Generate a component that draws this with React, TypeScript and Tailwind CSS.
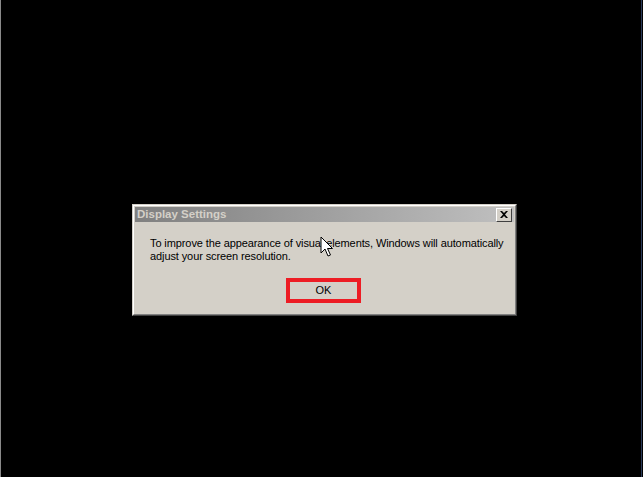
const Cursor = () => (
	<svg width="14" height="22" viewBox="0 0 14 22" className="absolute left-[320px] top-[236px]">
		<path d="M1 1 L1 17 L5 13 L8 20 L10.5 19 L7.5 12.5 L12.5 12.5 Z" fill="white" stroke="black" strokeWidth="1" />
	</svg>
);

const App = () => {
	return (
		<div className="relative w-[643px] h-[477px] bg-black overflow-hidden">
			<div className="absolute left-0 top-0 w-px h-full bg-[#8a8a8a]" />
			<div className="absolute right-[1px] top-0 w-px h-full bg-[#2a3a5a]" />
			<div className="pt-[204px] pl-[132px]">
				{/* ----- Dialog ----- */}
				<div
					className="w-[385px] h-[112px] bg-[#d4d0c8] border border-t-[#d4d0c8] border-l-[#d4d0c8] border-r-[#404040] border-b-[#404040]"
					style={{ fontFamily: "Tahoma, 'Liberation Sans', sans-serif" }}
				>
					<div className="h-full border border-t-white border-l-white border-r-[#808080] border-b-[#808080] p-px flex flex-col">
						<div className="h-[15px] flex items-center justify-between bg-gradient-to-r from-[#808080] to-[#c0c0c0] pl-[2px] pr-[2px]">
							<span className="text-[11.5px] font-bold text-[#d4d0c8] leading-none">Display Settings</span>
							<button className="w-[16px] h-[14px] bg-[#d4d0c8] border border-t-white border-l-white border-r-[#404040] border-b-[#404040] flex items-center justify-center">
								<svg width="8" height="7" viewBox="0 0 8 7">
									<path d="M0 0 L2 0 L4 2 L6 0 L8 0 L5 3.5 L8 7 L6 7 L4 5 L2 7 L0 7 L3 3.5 Z" fill="black" />
								</svg>
							</button>
						</div>
						<div className="pl-[15px] pt-[15px] text-[11px] leading-[13px] tracking-[-0.1px] text-black">
							<p>To improve the appearance of visual elements, Windows will automatically</p>
							<p>adjust your screen resolution.</p>
						</div>
						<div className="flex justify-center pt-[15px] pr-[2px]">
							<div className="border-4 border-[#ed1c24] w-[75px] h-[25px] flex items-center justify-center">
								<span className="text-[11px] text-black leading-none">OK</span>
							</div>
						</div>
					</div>
				</div>
			</div>
			<Cursor />
		</div>
	);
};

export default App;
